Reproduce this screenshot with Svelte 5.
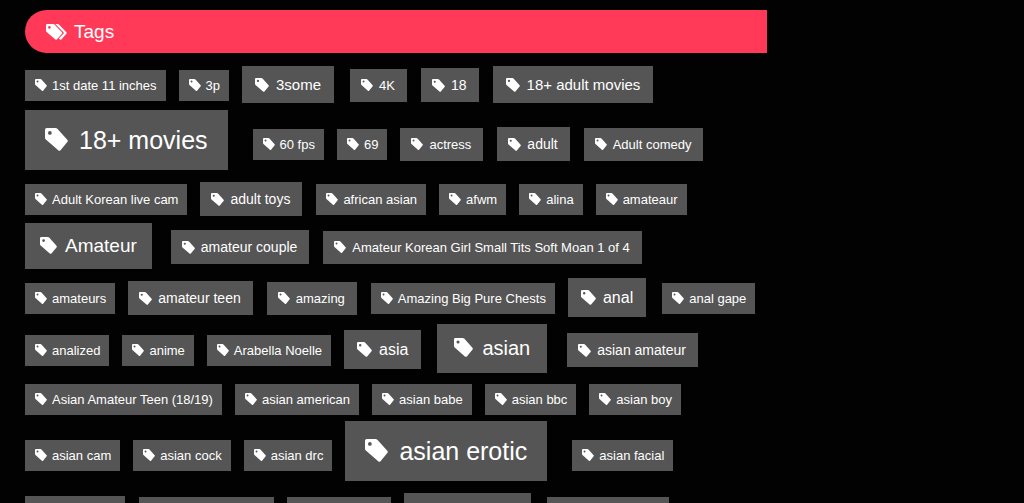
<script>
  const rows = [
    [
      { name: '1st date 11 inches', size: 'xs' },
      { name: '3p', size: 'xs' },
      { name: '3some', size: 'l' },
      { name: '4K', size: 's' },
      { name: '18', size: 'm' },
      { name: '18+ adult movies', size: 'l' }
    ],
    [
      { name: '18+ movies', size: 'huge' },
      { name: '60 fps', size: 'xs' },
      { name: '69', size: 'xs' },
      { name: 'actress', size: 's' },
      { name: 'adult', size: 'm' },
      { name: 'Adult comedy', size: 's' }
    ],
    [
      { name: 'Adult Korean live cam', size: 'xs' },
      { name: 'adult toys', size: 'm' },
      { name: 'african asian', size: 'xs' },
      { name: 'afwm', size: 'xs' },
      { name: 'alina', size: 'xs' },
      { name: 'amateaur', size: 'xs' }
    ],
    [
      { name: 'Amateur', size: 'xxl' },
      { name: 'amateur couple', size: 'm' },
      { name: 'Amateur Korean Girl Small Tits Soft Moan 1 of 4', size: 's' }
    ],
    [
      { name: 'amateurs', size: 'xs' },
      { name: 'amateur teen', size: 'm' },
      { name: 'amazing', size: 's' },
      { name: 'Amazing Big Pure Chests', size: 'xs' },
      { name: 'anal', size: 'xl' },
      { name: 'anal gape', size: 'xs' }
    ],
    [
      { name: 'analized', size: 'xs' },
      { name: 'anime', size: 'xs' },
      { name: 'Arabella Noelle', size: 'xs' },
      { name: 'asia', size: 'xl' },
      { name: 'asian', size: 'xxxl' },
      { name: 'asian amateur', size: 'm' }
    ],
    [
      { name: 'Asian Amateur Teen (18/19)', size: 'xs' },
      { name: 'asian american', size: 'xs' },
      { name: 'asian babe', size: 'xs' },
      { name: 'asian bbc', size: 'xs' },
      { name: 'asian boy', size: 'xs' }
    ],
    [
      { name: 'asian cam', size: 'xs' },
      { name: 'asian cock', size: 'xs' },
      { name: 'asian drc', size: 'xs' },
      { name: 'asian erotic', size: 'huge' },
      { name: 'asian facial', size: 'xs' }
    ],
    [
      { name: 'asian gold', size: 's' },
      { name: 'asian hd channel', size: 'xs' },
      { name: 'asian music', size: 'xs' },
      { name: 'asian movie', size: 'l' },
      { name: 'asian romance', size: 'xs' }
    ]
  ];
</script>

<main>
  <h1>
    <svg class="tags-icon" viewBox="0 0 21 16" aria-hidden="true">
      <path fill-rule="evenodd" d="M1.2 0H7.3Q8 0 8.5.5L15.9 8.3Q16.5 9 15.9 9.7L10.8 15.5Q10.1 16.2 9.4 15.5L.6 8Q0 7.5 0 6.8V1.2Q0 0 1.2 0ZM3.4 2.1A1.3 1.3 0 1 0 3.4 4.7A1.3 1.3 0 1 0 3.4 2.1Z" />
      <path d="M9.4 0H11.6Q12.3 0 12.9.5L20.4 8.3Q21 9 20.4 9.7L15.3 15.5Q14.6 16.2 13.9 15.5L12.8 14.5L17.6 9.5Q18.1 9 17.6 8.4Z" />
    </svg>
    Tags
  </h1>

  <div class="cloud">
    {#each rows as row}
      <div class="row">
        {#each row as tag}
          <a class="tag {tag.size}" href="#tags">
            <svg viewBox="0 0 16 16" aria-hidden="true">
              <path fill-rule="evenodd" d="M1.2 0H7.3Q8 0 8.6.5L15.5 8.2Q16.2 9 15.5 9.8L10.8 15.5Q10 16.2 9.2 15.5L.6 8Q0 7.5 0 6.8V1.2Q0 0 1.2 0ZM3.4 2.1A1.3 1.3 0 1 0 3.4 4.7A1.3 1.3 0 1 0 3.4 2.1Z" />
            </svg><span>{tag.name}</span>
          </a>
        {/each}
      </div>
    {/each}
  </div>
</main>

<style>
  :global(body) {
    background: #020202;
    overflow-x: hidden;
  }

  :global(html) {
    scrollbar-width: none;
  }

  main {
    box-sizing: border-box;
    width: 75%;
    padding: 10px 1px 0 25px;
    font-family: "Liberation Sans", Arial, sans-serif;
    color: #fff;
  }

  h1 {
    display: flex;
    align-items: center;
    gap: 7px;
    margin: 0 0 13px;
    padding: 10px 21px;
    border-radius: 22px 0 0 22px;
    background: #ff3957;
    font-size: 19px;
    font-weight: 400;
    line-height: 23px;
  }

  svg {
    fill: #fff;
  }

  .tags-icon {
    width: 21px;
    height: 16px;
  }

  .row {
    display: flex;
    align-items: baseline;
  }

  .tag {
    flex: none;
    background: #555;
    color: #fff;
    text-decoration: none;
    white-space: nowrap;
  }

  .tag:hover {
    background: #ff3957;
  }

  .tag svg {
    vertical-align: -2px;
  }

  .xs {
    margin: 0 13px 6px 0;
    padding: 8px 9px 8px 10px;
    font-size: 13px;
    line-height: 15px;
  }

  .xs svg {
    width: 12px;
    height: 12px;
    margin-right: 5px;
    vertical-align: -1px;
  }

  .s {
    margin: 0 14px 7px 0;
    padding: 9px 12px 9px 11px;
    font-size: 13px;
    line-height: 15px;
  }

  .s svg {
    width: 12px;
    height: 12px;
    margin-right: 6px;
    vertical-align: -1px;
  }

  .m {
    margin: 0 14px 7px 0;
    padding: 9px 12px 9px 11px;
    font-size: 14px;
    line-height: 16px;
  }

  .m svg {
    width: 13px;
    height: 13px;
    margin-right: 6px;
  }

  .l {
    margin: 0 16px 7px 0;
    padding: 10px 13px;
    font-size: 15px;
    line-height: 17px;
  }

  .l svg {
    width: 14px;
    height: 14px;
    margin-right: 7px;
  }

  .xl {
    margin: 0 16px 7px 0;
    padding: 10px 13px;
    font-size: 16px;
    line-height: 19px;
  }

  .xl svg {
    width: 15px;
    height: 15px;
    margin-right: 7px;
  }

  .xxl {
    margin: 0 19px 9px 0;
    padding: 12px 15px;
    font-size: 19px;
    line-height: 22px;
  }

  .xxl svg {
    width: 17px;
    height: 17px;
    margin-right: 8px;
  }

  .xxxl {
    margin: 0 20px 11px 0;
    padding: 13px 17px;
    font-size: 20px;
    line-height: 23px;
  }

  .xxxl svg {
    width: 19px;
    height: 19px;
    margin-right: 9px;
  }

  .huge {
    margin: 0 25px 12px 0;
    padding: 16px 20px;
    font-size: 25px;
    line-height: 28px;
  }

  .huge svg {
    width: 23px;
    height: 23px;
    margin-right: 11px;
    vertical-align: -2px;
  }
</style>
